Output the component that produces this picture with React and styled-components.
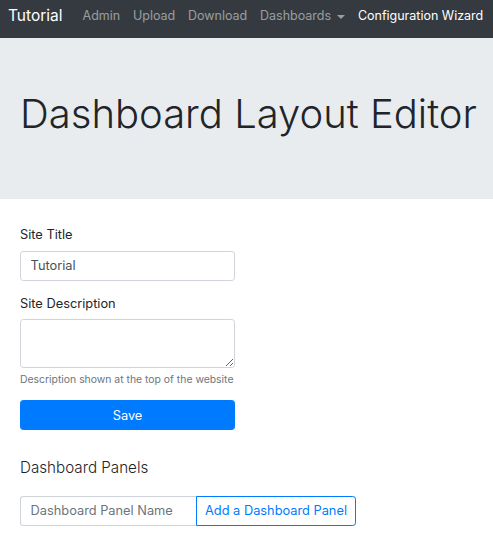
import React from "react";
import styled, { createGlobalStyle } from "styled-components";

const Global = createGlobalStyle`
  html, body { margin: 0; padding: 0; background: #fff; }
  body {
    font-family: Inter, "Noto Sans", "Liberation Sans", sans-serif;
    color: #212529;
    font-size: 12.8px;
    line-height: 1.5;
  }
  * { box-sizing: border-box; }
`;

const Navbar = styled.nav`
  height: 38px;
  background: #343a40;
  display: flex;
  align-items: center;
  padding: 0 8px 6px 8px;
  white-space: nowrap;
  overflow: hidden;
`;

const Brand = styled.a`
  color: #fff;
  font-size: 15.5px;
  margin-right: 13.6px;
  text-decoration: none;
`;

const NavLink = styled.a`
  color: ${(p) => (p.$active ? "#fff" : "rgba(255,255,255,0.5)")};
  font-size: 12.5px;
  padding: 0 6.4px;
  text-decoration: none;
  display: inline-flex;
  align-items: center;
`;

const Caret = styled.span`
  display: inline-block;
  margin-left: 6px;
  border-top: 4px solid currentColor;
  border-left: 4px solid transparent;
  border-right: 4px solid transparent;
  margin-top: 1px;
`;

const Jumbotron = styled.header`
  height: 161px;
  background: #e9ecef;
  display: flex;
  align-items: center;
  padding: 0 20px 10px 20px;
  margin-bottom: 26px;
`;

const Title = styled.h1`
  margin: 0;
  font-size: 40px;
  font-weight: 300;
  line-height: 1.2;
  white-space: nowrap;
`;

const Main = styled.main`
  padding: 0 20px;
`;

const Form = styled.form`
  width: 215px;
`;

const Group = styled.div`
  margin-bottom: 12.8px;
`;

const Label = styled.label`
  display: block;
  margin-bottom: 6.4px;
`;

const Input = styled.input`
  display: block;
  width: 100%;
  height: 30.4px;
  padding: 0 9.6px;
  font: inherit;
  color: #495057;
  border: 1px solid #ced4da;
  border-radius: 3.2px;
  background: #fff;
`;

const TextArea = styled.textarea`
  display: block;
  width: 100%;
  height: 49px;
  padding: 4.8px 9.6px;
  font: inherit;
  border: 1px solid #ced4da;
  border-radius: 3.2px;
  background: #fff;
`;

const Help = styled.small`
  display: block;
  margin-top: 3.2px;
  font-size: 10.4px;
  color: #6c757d;
  white-space: nowrap;
`;

const SaveButton = styled.button`
  display: block;
  width: 100%;
  height: 30.4px;
  background: #007bff;
  color: #fff;
  border: 1px solid #007bff;
  border-radius: 3.2px;
  font: inherit;
`;

const SectionTitle = styled.h5`
  margin: 28.5px 0 18.9px 0;
  font-size: 15.2px;
  font-weight: 300;
  line-height: 1.2;
`;

const InputGroup = styled.div`
  display: flex;
  width: 336px;
  height: 30px;
`;

const GroupInput = styled.input`
  flex: 1;
  min-width: 0;
  padding: 0 9.6px;
  font: inherit;
  border: 1px solid #ced4da;
  border-right: none;
  border-radius: 3.2px 0 0 3.2px;
  &::placeholder { color: #6c757d; }
`;

const OutlineButton = styled.button`
  width: 160px;
  flex: none;
  background: #fff;
  color: #007bff;
  border: 1px solid #007bff;
  border-radius: 0 3.2px 3.2px 0;
  font: inherit;
  white-space: nowrap;
`;

export default function App() {
  return (
    <>
      <Global />
      <Navbar>
        <Brand href="#">Tutorial</Brand>
        <NavLink href="#">Admin</NavLink>
        <NavLink href="#">Upload</NavLink>
        <NavLink href="#">Download</NavLink>
        <NavLink href="#">
          Dashboards<Caret />
        </NavLink>
        <NavLink href="#" $active>
          Configuration Wizard
        </NavLink>
      </Navbar>
      <Jumbotron>
        <Title>Dashboard Layout Editor</Title>
      </Jumbotron>
      <Main>
        <Form onSubmit={(e) => e.preventDefault()}>
          <Group>
            <Label>Site Title</Label>
            <Input defaultValue="Tutorial" />
          </Group>
          <Group>
            <Label>Site Description</Label>
            <TextArea />
            <Help>Description shown at the top of the website</Help>
          </Group>
          <SaveButton type="submit">Save</SaveButton>
        </Form>
        <SectionTitle>Dashboard Panels</SectionTitle>
        <InputGroup>
          <GroupInput placeholder="Dashboard Panel Name" />
          <OutlineButton type="button">Add a Dashboard Panel</OutlineButton>
        </InputGroup>
      </Main>
    </>
  );
}
